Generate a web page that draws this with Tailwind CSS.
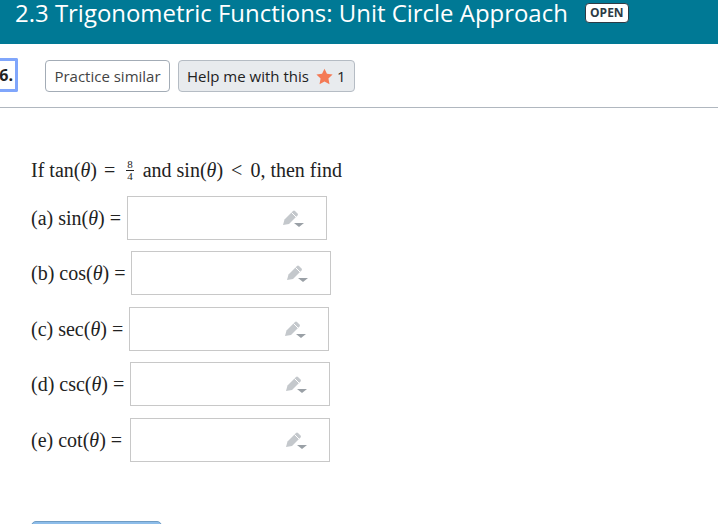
<!DOCTYPE html>
<html lang="en">
<head>
  <meta charset="UTF-8">
  <title>2.3 Trigonometric Functions</title>
  <script src="https://cdn.jsdelivr.net/npm/@tailwindcss/browser@4"></script>
</head>
<body class="h-[524px] w-[718px] overflow-hidden bg-white font-['Open_Sans',sans-serif]">
  <!-- Header -->
  <header class="flex h-[44px] items-start bg-[#007995] pl-[15px]">
    <h1 class="whitespace-nowrap text-[23.95px] leading-[26px] text-white">2.3 Trigonometric Functions: Unit Circle Approach</h1>
    <span class="ml-[17px] mt-[3px] flex h-[20px] w-[44px] items-center justify-center rounded-[4px] border border-[#2d3b45] bg-white text-[12px] font-bold text-[#2d3b45]">OPEN</span>
  </header>

  <!-- Toolbar -->
  <div class="flex h-[64px] items-start border-b border-[#b0b7bf]">
    <div class="mt-[14px] flex h-[34px] w-[18px] items-center justify-end rounded-r-[2px] border-[3px] border-l-0 border-[#80a6fb] pr-[2px] text-[16px] font-bold text-[#222]">6.</div>
    <button class="ml-[27px] mt-[16px] h-[32px] w-[125px] rounded-[4px] border border-[#a3acb6] bg-white text-[15px] text-[#444]">Practice similar</button>
    <button class="ml-[8px] mt-[16px] flex h-[32px] w-[177px] items-center rounded-[4px] border border-[#b5bcc4] bg-[#e8ebee] pl-[8px] text-[15px] text-[#222]">
      Help me with this
      <svg class="ml-[7px]" width="17" height="17" viewBox="0 0 16 16"><path d="M8 .6l2.300 4.900 5.300.7-3.900 3.700 1 5.300L8 12.600l-4.700 2.600 1-5.300L.4 6.200l5.300-.7z" fill="#f47a55"/></svg>
      <span class="ml-[4px]">1</span>
    </button>
  </div>

  <!-- Question -->
  <main class="pl-[31px] font-['Liberation_Serif',serif] text-[20px] text-[#222]">
    <p class="mt-[48px] flex h-[28px] items-center whitespace-nowrap">
      If tan(<i>θ</i>)<span class="ml-[7px] mr-[11px]">=</span>
      <span class="inline-flex flex-col items-center text-[11px] leading-[11px]"><span class="border-b border-[#222] px-[1px]">8</span><span>4</span></span>
      <span class="ml-[9px]">and sin(<i>θ</i>)<span class="mx-[8px]">&lt;</span>0, then find</span>
    </p>

    <div class="mt-[12px] flex h-[44px] items-center">
      <span class="w-[96px] shrink-0">(a) sin(<i>θ</i>) =</span>
      <div class="flex h-[44px] w-[200px] items-center justify-end border border-[#c8c8c8] pr-[21px]">
        <svg width="22" height="18" viewBox="0 0 22 18"><path d="M0 16L1.500 10.500 10 2Q11 1 12 2L14.500 4.500Q15.500 5.500 14.500 6.500L6 15Z" fill="#c4c8cc"/><path d="M8.500 3.500L13 8" stroke="#fff"/><path d="M11 14h10l-5 4z" fill="#9aa0a6"/></svg>
      </div>
    </div>
    <div class="mt-[11px] flex h-[44px] items-center">
      <span class="w-[100px] shrink-0">(b) cos(<i>θ</i>) =</span>
      <div class="flex h-[44px] w-[200px] items-center justify-end border border-[#c8c8c8] pr-[21px]">
        <svg width="22" height="18" viewBox="0 0 22 18"><path d="M0 16L1.500 10.500 10 2Q11 1 12 2L14.500 4.500Q15.500 5.500 14.500 6.500L6 15Z" fill="#c4c8cc"/><path d="M8.500 3.500L13 8" stroke="#fff"/><path d="M11 14h10l-5 4z" fill="#9aa0a6"/></svg>
      </div>
    </div>
    <div class="mt-[12px] flex h-[44px] items-center">
      <span class="w-[98px] shrink-0">(c) sec(<i>θ</i>) =</span>
      <div class="flex h-[44px] w-[200px] items-center justify-end border border-[#c8c8c8] pr-[21px]">
        <svg width="22" height="18" viewBox="0 0 22 18"><path d="M0 16L1.500 10.500 10 2Q11 1 12 2L14.500 4.500Q15.500 5.500 14.500 6.500L6 15Z" fill="#c4c8cc"/><path d="M8.500 3.500L13 8" stroke="#fff"/><path d="M11 14h10l-5 4z" fill="#9aa0a6"/></svg>
      </div>
    </div>
    <div class="mt-[11px] flex h-[44px] items-center">
      <span class="w-[99px] shrink-0">(d) csc(<i>θ</i>) =</span>
      <div class="flex h-[44px] w-[200px] items-center justify-end border border-[#c8c8c8] pr-[21px]">
        <svg width="22" height="18" viewBox="0 0 22 18"><path d="M0 16L1.500 10.500 10 2Q11 1 12 2L14.500 4.500Q15.500 5.500 14.500 6.500L6 15Z" fill="#c4c8cc"/><path d="M8.500 3.500L13 8" stroke="#fff"/><path d="M11 14h10l-5 4z" fill="#9aa0a6"/></svg>
      </div>
    </div>
    <div class="mt-[12px] flex h-[44px] items-center">
      <span class="w-[99px] shrink-0">(e) cot(<i>θ</i>) =</span>
      <div class="flex h-[44px] w-[200px] items-center justify-end border border-[#c8c8c8] pr-[21px]">
        <svg width="22" height="18" viewBox="0 0 22 18"><path d="M0 16L1.500 10.500 10 2Q11 1 12 2L14.500 4.500Q15.500 5.500 14.500 6.500L6 15Z" fill="#c4c8cc"/><path d="M8.500 3.500L13 8" stroke="#fff"/><path d="M11 14h10l-5 4z" fill="#9aa0a6"/></svg>
      </div>
    </div>

    <div class="mt-[59px] h-[20px] w-[131px] rounded-t-[5px] border border-[#6f9cc4] bg-[#8dbdea]"></div>
  </main>
</body>
</html>
